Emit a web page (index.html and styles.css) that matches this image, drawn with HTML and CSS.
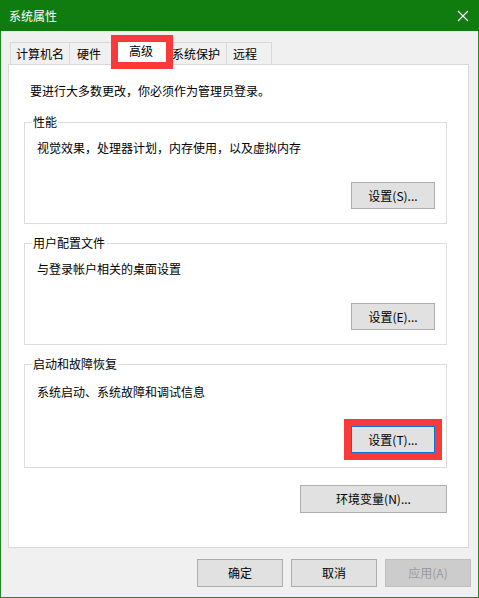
FILE: index.html
```html
<!DOCTYPE html>
<html lang="zh-CN">
<head>
<meta charset="utf-8">
<title>系统属性</title>
<link rel="stylesheet" href="styles.css">
</head>
<body>
<div class="window">
  <div class="titlebar">
    <span class="title">系统属性</span>
    <svg class="close" width="12" height="12" viewBox="0 0 12 12"><path d="M1 1 L11 11 M11 1 L1 11" stroke="#fff" stroke-width="1.2" fill="none"/></svg>
  </div>
  <div class="content">
    <div class="tabs">
      <div class="tab tab--name">计算机名</div>
      <div class="tab tab--hw">硬件</div>
      <div class="tab tab--active">高级<span class="mark mark--tab"></span></div>
      <div class="tab tab--prot">系统保护</div>
      <div class="tab tab--remote">远程</div>
    </div>
    <div class="panel">
      <p class="intro">要进行大多数更改，你必须作为管理员登录。</p>
      <div class="group">
        <span class="legend">性能</span>
        <p class="desc">视觉效果，处理器计划，内存使用，以及虚拟内存</p>
        <div class="btn-row"><button class="btn">设置(S)...</button></div>
      </div>
      <div class="group">
        <span class="legend">用户配置文件</span>
        <p class="desc">与登录帐户相关的桌面设置</p>
        <div class="btn-row"><button class="btn">设置(E)...</button></div>
      </div>
      <div class="group group--last">
        <span class="legend">启动和故障恢复</span>
        <p class="desc">系统启动、系统故障和调试信息</p>
        <div class="btn-row"><span class="btn-wrap"><button class="btn btn--focus">设置(T)...</button><span class="mark mark--btn"></span></span></div>
      </div>
      <div class="env-row"><button class="btn btn--env">环境变量(N)...</button></div>
    </div>
    <div class="footer">
      <button class="btn btn--foot">确定</button>
      <button class="btn btn--foot">取消</button>
      <button class="btn btn--foot btn--disabled">应用(A)</button>
    </div>
  </div>
</div>
</body>
</html>
```
FILE: styles.css
```css
* { box-sizing: border-box; }
html, body { margin: 0; padding: 0; background: #f0f0f0; }
body {
  font-family: "Noto Sans CJK SC", "Noto Sans", sans-serif;
  font-size: 12px;
  line-height: 16px;
  color: #000;
}
.window {
  width: 479px;
  height: 598px;
  border: 1px solid #238a23;
  border-top: none;
  background: #f0f0f0;
  display: flex;
  flex-direction: column;
}
.titlebar {
  height: 31px;
  margin: 0 -1px;
  background: #107c10;
  display: flex;
  align-items: center;
  justify-content: space-between;
  padding: 0 10px 0 9px;
  color: #fff;
}
.title { font-size: 12px; line-height: 16px; }
.close { display: block; }
.content {
  padding: 11px 9px 0 7px;
  display: flex;
  flex-direction: column;
}
.tabs {
  display: flex;
  padding-left: 2px;
  height: 22px;
  align-items: flex-end;
  position: relative;
  z-index: 1;
}
.tab {
  height: 22px;
  border: 1px solid #d9d9d9;
  border-right: none;
  border-bottom: none;
  background: #f0f0f0;
  padding-top: 3px;
  white-space: nowrap;
}
.tab--name { width: 59px; padding-left: 5px; }
.tab--hw { width: 42px; padding-left: 7px; }
.tab--active {
  width: 60px;
  height: 26px;
  margin-bottom: -1px;
  background: #fff;
  text-align: center;
  padding-top: 3px;
  position: relative;
  border-right: 1px solid #d9d9d9;
}
.tab--prot { width: 55px; padding-left: 1px; border-left: none; }
.tab--remote { width: 46px; padding-left: 6px; border-right: 1px solid #d9d9d9; }
.mark {
  position: absolute;
  border: 7px solid #fa3a3a;
  pointer-events: none;
}
.mark--tab { left: -1px; top: -5px; width: 62px; height: 34px; }
.panel {
  height: 484px;
  width: 461px;
  background: #fff;
  border: 1px solid #d9d9d9;
  padding: 18px 21px 0 15px;
  display: flex;
  flex-direction: column;
}
.intro { margin: 0 0 23px 6px; }
.group {
  position: relative;
  border: 1px solid #dcdcdc;
  padding: 17px 11px 14px 12px;
  margin-bottom: 19px;
}
.group--last { margin-bottom: 17px; padding-top: 19px; }
.legend {
  position: absolute;
  top: -9px;
  left: 7px;
  background: #fff;
  padding: 0 1px;
}
.desc { margin: 0 0 26px 0; }
.btn-row { display: flex; justify-content: flex-end; }
.btn-wrap { position: relative; display: block; }
.mark--btn { left: -7px; top: -7px; right: -7px; bottom: -7px; }
.btn {
  font-family: inherit;
  font-size: 12px;
  line-height: 16px;
  color: #000;
  background: #e1e1e1;
  border: 1px solid #adadad;
  width: 84px;
  height: 27px;
  padding: 0;
  margin: 0;
  display: block;
}
.btn--focus { border-color: #0078d7; }
.env-row { display: flex; justify-content: flex-end; }
.btn--env { width: 147px; height: 28px; }
.footer {
  display: flex;
  justify-content: flex-end;
  gap: 8px;
  margin-top: 11px;
  margin-right: -2px;
}
.btn--foot { width: 86px; height: 28px; }
.btn--disabled { background: #cccccc; border-color: #bfbfbf; color: #9a9a9a; }
```
